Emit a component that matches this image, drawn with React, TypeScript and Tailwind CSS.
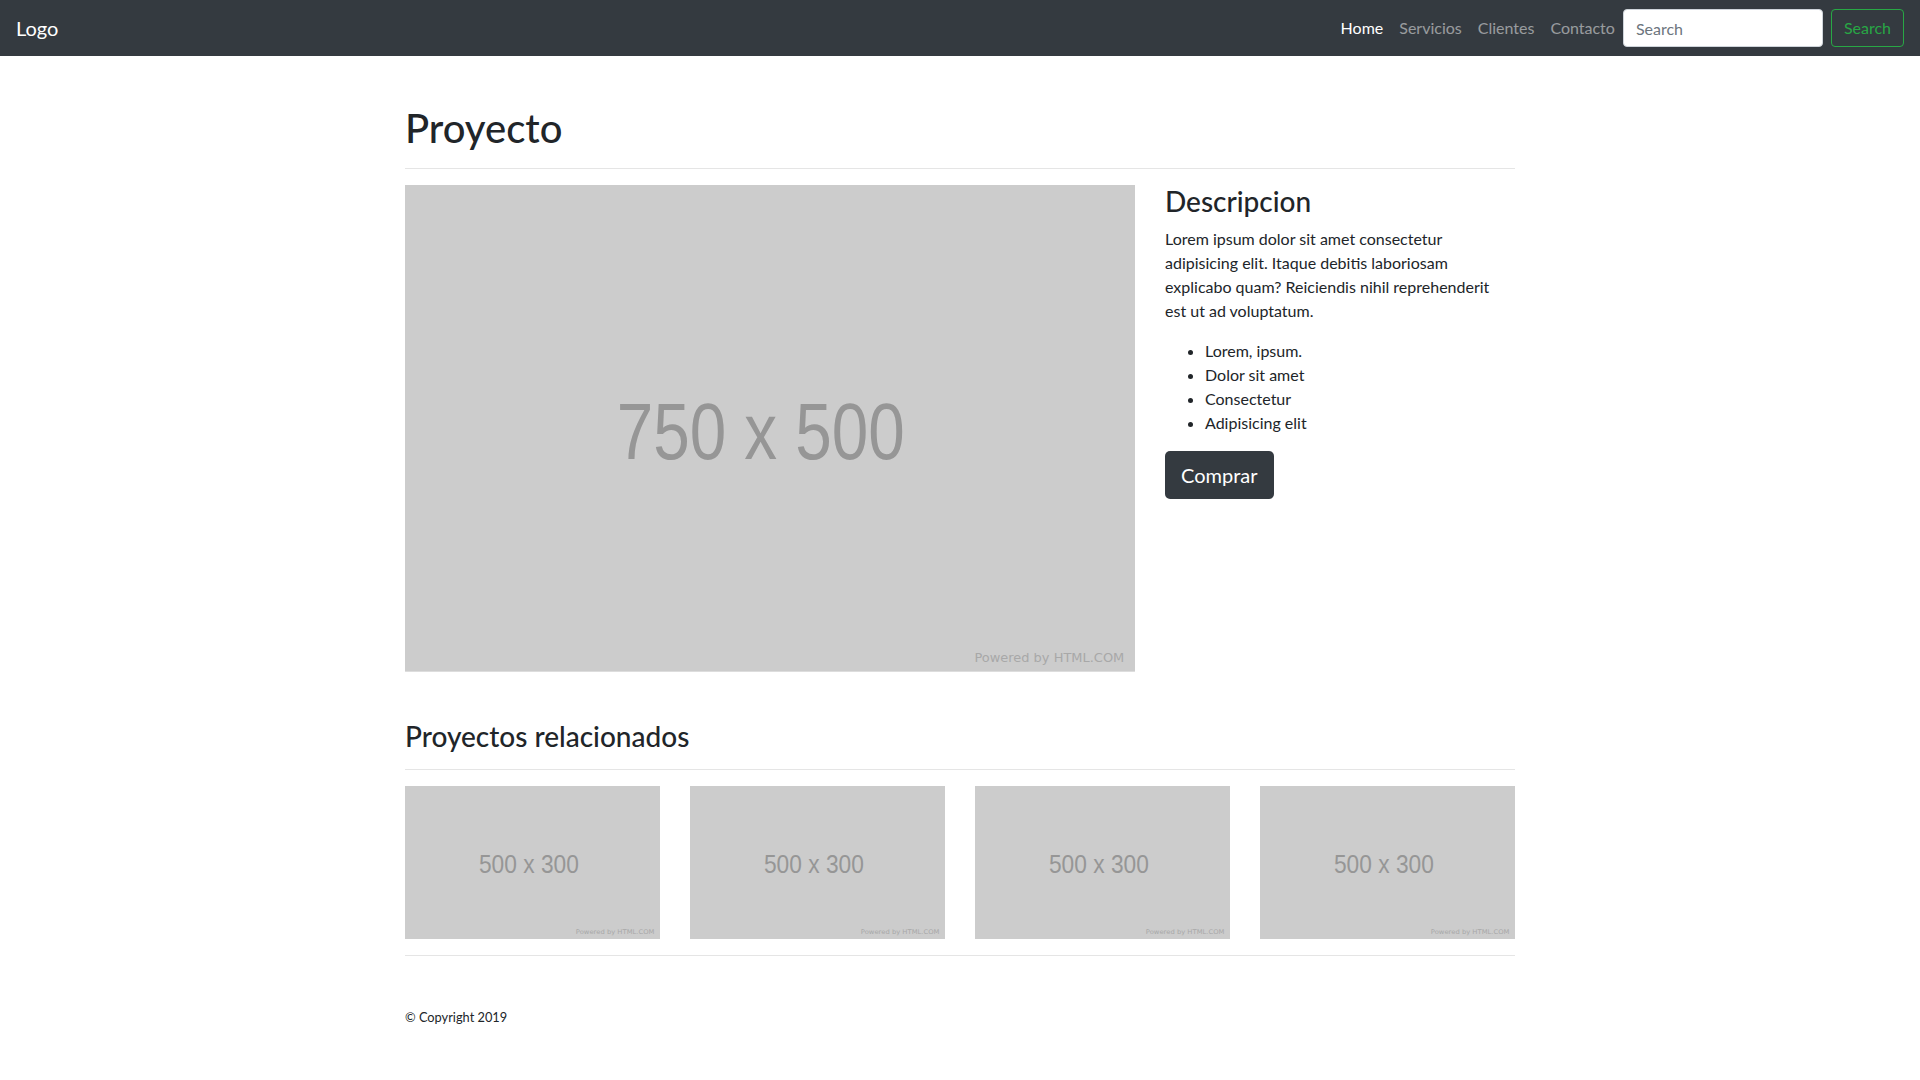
import React from "react";

type PlaceholderProps = {
  w: number;
  h: number;
  label: string;
  labelX: number;
  labelY: number;
  labelSize: number;
  labelLength: number;
  className?: string;
};

// grey "W x H" placeholder like the html.com dummy images
const Placeholder = ({
  w,
  h,
  label,
  labelX,
  labelY,
  labelSize,
  labelLength,
  className,
}: PlaceholderProps) => {
  return (
    <svg viewBox={`0 0 ${w} ${h}`} className={className}>
      <rect width={w} height={h} fill="#cccccc" />
      <text
        x={labelX}
        y={labelY}
        textAnchor="middle"
        fontSize={labelSize}
        textLength={labelLength}
        lengthAdjust="spacingAndGlyphs"
        fill="#969696"
        fontFamily="'Liberation Sans', Arial, sans-serif"
      >
        {label}
      </text>
      <text
        x={w - 11}
        y={h - 10}
        textAnchor="end"
        fontSize={12.5}
        textLength={154}
        lengthAdjust="spacingAndGlyphs"
        fill="#a8a8a8"
        fontFamily="'DejaVu Sans', Verdana, sans-serif"
      >
        Powered by HTML.COM
      </text>
    </svg>
  );
};

const navLinks = [
  { name: "Home", active: true },
  { name: "Servicios", active: false },
  { name: "Clientes", active: false },
  { name: "Contacto", active: false },
];

const features = ["Lorem, ipsum.", "Dolor sit amet", "Consectetur", "Adipisicing elit"];

const App = () => {
  return (
    <div className="min-h-screen bg-white font-['Lato','Open_Sans',sans-serif] text-[#212529]">
      <nav className="flex h-14 items-center justify-between bg-[#343a40] px-4">
        <a href="#" className="text-xl leading-[30px] text-white">
          Logo
        </a>
        <div className="flex items-center">
          <ul className="flex">
            {navLinks.map((link) => (
              <li key={link.name}>
                <a
                  href="#"
                  className={`block px-2 py-2 text-base leading-6 ${
                    link.active ? "text-white" : "text-white/50"
                  }`}
                >
                  {link.name}
                </a>
              </li>
            ))}
          </ul>
          <form
            className="flex items-center"
            onSubmit={(e) => {
              e.preventDefault();
            }}
          >
            <input
              type="search"
              placeholder="Search"
              className="mr-2 h-[38px] w-[200px] rounded border border-[#ced4da] bg-white px-3 text-base text-[#495057] placeholder:text-[#6c757d] outline-none"
            />
            <button
              type="submit"
              className="h-[38px] rounded border border-[#28a745] px-3 text-base text-[#28a745]"
            >
              Search
            </button>
          </form>
        </div>
      </nav>

      <main className="mx-auto w-[1110px]">
        <h1 className="mt-12 mb-2 text-[40px] leading-[1.2] font-medium">Proyecto</h1>
        <hr className="my-4 border-black/10" />

        <div className="flex gap-[30px]">
          <Placeholder
            w={750}
            h={500}
            label="750 x 500"
            labelX={365.5}
            labelY={282}
            labelSize={82}
            labelLength={296}
            className="w-[730px] shrink-0"
          />
          <div className="w-[350px]">
            <h3 className="mb-2 text-[28px] leading-[1.2] font-medium">Descripcion</h3>
            <p className="mb-4 w-[340px] text-base leading-6">
              Lorem ipsum dolor sit amet consectetur adipisicing elit. Itaque debitis
              laboriosam explicabo quam? Reiciendis nihil reprehenderit est ut ad
              voluptatum.
            </p>
            <ul className="mb-4 list-disc pl-10 text-base leading-6">
              {features.map((f) => (
                <li key={f}>{f}</li>
              ))}
            </ul>
            <button className="h-12 rounded-[5px] bg-[#343a40] px-4 text-xl text-white">
              Comprar
            </button>
          </div>
        </div>

        <h3 className="mt-12 mb-2 text-[28px] leading-[1.2] font-medium">
          Proyectos relacionados
        </h3>
        <hr className="my-4 border-black/10" />

        <div className="grid grid-cols-4 gap-[30px]">
          {[1, 2, 3, 4].map((n) => (
            <a href="#" key={n}>
              <Placeholder
                w={500}
                h={300}
                label="500 x 300"
                labelX={243}
                labelY={170}
                labelSize={51}
                labelLength={196}
                className="w-full"
              />
            </a>
          ))}
        </div>
        <hr className="mt-4 border-black/10" />

        <footer className="pt-[52px] pb-12">
          <p className="text-[12.8px] leading-[1.5]">© Copyright 2019</p>
        </footer>
      </main>
    </div>
  );
};

export default App;
